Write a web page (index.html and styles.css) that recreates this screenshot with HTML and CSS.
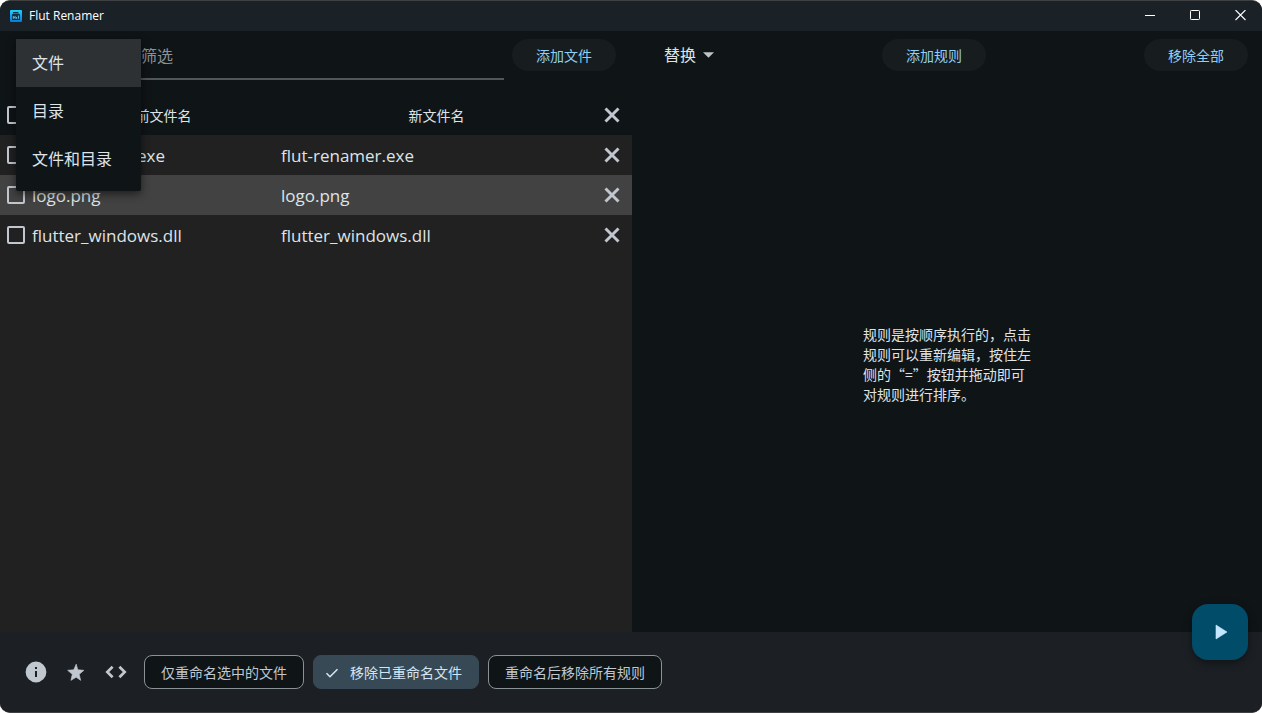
FILE: index.html
```html
<!DOCTYPE html>
<html lang="zh-CN">
<head>
<meta charset="utf-8">
<title>Flut Renamer</title>
<link rel="stylesheet" href="styles.css">
</head>
<body>
<svg class="defs" aria-hidden="true">
  <symbol id="close" viewBox="0 0 24 24"><path d="M5.5 5.500 18.500 18.500M18.500 5.500 5.500 18.500" fill="none" stroke="currentColor" stroke-width="2.900"/></symbol>
</svg>
<div class="window">
  <header class="titlebar">
    <svg class="app-icon" viewBox="0 0 12 12" aria-hidden="true">
      <defs><linearGradient id="logo" x1="0" y1="0" x2="0" y2="1"><stop offset="0" stop-color="#1fd0fb"/><stop offset="1" stop-color="#0878e0"/></linearGradient></defs>
      <rect width="12" height="12" rx="1" fill="url(#logo)"/>
      <path d="M3 2h5l1 1.4H3z" fill="#103246"/>
      <rect x="2" y="4" width="8" height="6" rx=".6" fill="#103246"/>
      <path d="M3.300 8.800V6.400l1.800 2V6M6.600 8.800V7M8.400 8.800V5.600" fill="none" stroke="#5cd2f5" stroke-width=".9"/>
    </svg>
    <span class="app-name">Flut Renamer</span>
    <div class="window-controls">
      <button aria-label="最小化"><svg viewBox="0 0 12 12"><path d="M1 5.500h10" stroke="currentColor"/></svg></button>
      <button aria-label="最大化"><svg viewBox="0 0 12 12"><rect x="1.500" y=".5" width="9" height="9" rx=".8" fill="none" stroke="currentColor"/></svg></button>
      <button aria-label="关闭"><svg viewBox="0 0 12 12"><path d="M1.500 0l10 10M11.500 0l-10 10" stroke="currentColor" stroke-width="1.100"/></svg></button>
    </div>
  </header>

  <main class="content">
    <section class="files">
      <div class="toolbar files-toolbar">
        <div class="type-picker">
          <div class="menu" role="listbox" aria-label="类型">
            <button class="menu-item selected" role="option" aria-selected="true">文件</button>
            <button class="menu-item" role="option">目录</button>
            <button class="menu-item" role="option">文件和目录</button>
          </div>
        </div>
        <input class="filter" type="text" placeholder="筛选" aria-label="筛选">
        <button class="pill">添加文件</button>
      </div>
      <table class="file-table">
        <colgroup><col class="col-check"><col class="col-current"><col><col class="col-remove"></colgroup>
        <thead>
          <tr>
            <th><input type="checkbox" aria-label="全选"></th>
            <th class="name">当前文件名</th>
            <th class="name">新文件名</th>
            <th><button class="remove" aria-label="移除全部文件"><svg><use href="#close"/></svg></button></th>
          </tr>
        </thead>
        <tbody>
          <tr>
            <td><input type="checkbox" aria-label="flut-renamer.exe"></td>
            <td class="name">flut-renamer.exe</td>
            <td class="name">flut-renamer.exe</td>
            <td><button class="remove" aria-label="移除"><svg><use href="#close"/></svg></button></td>
          </tr>
          <tr class="active">
            <td><input type="checkbox" aria-label="logo.png"></td>
            <td class="name">logo.png</td>
            <td class="name">logo.png</td>
            <td><button class="remove" aria-label="移除"><svg><use href="#close"/></svg></button></td>
          </tr>
          <tr>
            <td><input type="checkbox" aria-label="flutter_windows.dll"></td>
            <td class="name">flutter_windows.dll</td>
            <td class="name">flutter_windows.dll</td>
            <td><button class="remove" aria-label="移除"><svg><use href="#close"/></svg></button></td>
          </tr>
        </tbody>
      </table>
    </section>

    <section class="rules">
      <div class="toolbar rules-toolbar">
        <div class="rule-picker">
          <select aria-label="规则类型"><option>替换</option></select>
          <svg class="arrow" viewBox="0 0 10 5" aria-hidden="true"><path d="M0 0h10L5 5z" fill="currentColor"/></svg>
        </div>
        <button class="pill">添加规则</button>
        <button class="pill">移除全部</button>
      </div>
      <div class="empty">
        <p class="hint">规则是按顺序执行的，点击<br>规则可以重新编辑，按住左<br>侧的“=”按钮并拖动即可<br>对规则进行排序。</p>
      </div>
    </section>
  </main>

  <footer class="footer">
    <div class="links">
      <button aria-label="关于"><svg viewBox="0 0 24 24"><path fill="currentColor" d="M12 1.600a10.400 10.400 0 1 0 0 20.800 10.400 10.400 0 0 0 0-20.800zm1 15.400h-2v-6h2v6zm0-8h-2V7h2v2z"/></svg></button>
      <button aria-label="收藏"><svg viewBox="0 0 24 24"><path fill="currentColor" stroke="currentColor" stroke-width=".8" d="M12 17.270 17.180 21l-1.640-7.030L21 9.240l-7.190-.61L12 2 9.190 8.630 2 9.240l5.460 4.730L5.820 21z" transform="translate(2 2.500) scale(.85)"/></svg></button>
      <button aria-label="源代码"><svg viewBox="0 0 24 24"><path fill="none" stroke="currentColor" stroke-width="2.700" d="M8.600 6.700 3.300 12l5.300 5.300M15.400 6.700l5.300 5.300-5.300 5.300"/></svg></button>
    </div>
    <div class="chips">
      <button class="chip" aria-pressed="false">仅重命名选中的文件</button>
      <button class="chip on" aria-pressed="true"><svg viewBox="0 0 14 14" aria-hidden="true"><path d="M1.500 7.200 5 10.700 12.500 3.200" fill="none" stroke="currentColor" stroke-width="1.600"/></svg>移除已重命名文件</button>
      <button class="chip" aria-pressed="false">重命名后移除所有规则</button>
    </div>
  </footer>
  <button class="run" aria-label="运行"><svg viewBox="0 0 24 24"><path fill="currentColor" stroke="currentColor" stroke-width=".6" stroke-linejoin="round" d="M8 5v14l11-7z"/></svg></button>
</div>
</body>
</html>
```
FILE: styles.css
```css
* {
  box-sizing: border-box;
}

body {
  margin: 0;
  background: #fff;
  color: #dfe3e7;
  font: 14px/20px "Open Sans", "Noto Sans CJK SC", sans-serif;
}

button,
input,
select {
  margin: 0;
  padding: 0;
  border: 0;
  background: none;
  color: inherit;
  font: inherit;
}

svg {
  display: block;
}

.defs {
  position: absolute;
  width: 0;
  height: 0;
}

.window {
  position: relative;
  display: flex;
  flex-direction: column;
  min-height: 100vh;
  overflow: hidden;
  border-top: 1px solid #3f4042;
  border-bottom: 1px solid #3f4042;
  border-radius: 10px;
  background: #0f1417;
}

.titlebar {
  display: flex;
  align-items: center;
  height: 30px;
  padding-left: 10px;
  background: #1a2127;
  color: #fff;
  font-size: 12px;
}

.app-icon {
  width: 12px;
  height: 12px;
  margin-right: 7px;
}

.window-controls {
  display: flex;
  margin-left: auto;
}

.window-controls button {
  display: grid;
  place-items: center;
  width: 45px;
  height: 30px;
}

.window-controls svg {
  width: 12px;
  height: 12px;
}

.content {
  display: flex;
  flex: 1;
}

.files {
  flex: none;
  width: calc(50% + 1px);
  background: #212121;
}

.rules {
  display: flex;
  flex: 1;
  flex-direction: column;
}

.toolbar {
  display: flex;
  align-items: flex-start;
  height: 64px;
  padding-top: 8px;
  background: #0f1417;
}

.files-toolbar {
  padding-right: 16px;
  padding-left: 16px;
}

.type-picker {
  position: relative;
  flex: none;
  width: 125px;
}

.menu {
  position: absolute;
  z-index: 2;
  top: 0;
  left: 0;
  width: 100%;
  padding-bottom: 8px;
  border-radius: 2px;
  background: #0f1417;
  box-shadow: 0 3px 8px rgba(0, 0, 0, .55);
}

.menu-item {
  display: block;
  width: 100%;
  height: 48px;
  padding-left: 16px;
  font-size: 16px;
  text-align: left;
}

.menu-item.selected {
  background: #2d3134;
}

.filter {
  flex: 1;
  min-width: 0;
  height: 41px;
  margin-right: 8px;
  padding-bottom: 6px;
  border-bottom: 2px solid #50565a;
  font-size: 16px;
}

.filter::placeholder {
  color: #8d9194;
  opacity: 1;
}

.pill {
  width: 104px;
  height: 32px;
  padding-top: 2px;
  border-radius: 16px;
  background: #171c1f;
  color: #8fcff3;
}

.file-table {
  width: 100%;
  table-layout: fixed;
  border-collapse: collapse;
}

.col-check {
  width: 32px;
}

.col-current {
  width: 39.4%;
}

.col-remove {
  width: 40px;
}

.file-table tr {
  height: 40px;
}

.file-table thead {
  background: #0f1417;
}

.file-table th {
  padding: 0;
  font-weight: 400;
}

.file-table td {
  padding: 0;
  font-size: 17px;
}

.file-table .name {
  padding-top: 2px;
}

.file-table .active {
  background: #424242;
}

.file-table input {
  display: block;
  width: 18px;
  height: 18px;
  margin: 0 auto;
  border: 2px solid #c0c7cf;
  border-radius: 2px;
  appearance: none;
}

.remove {
  display: grid;
  place-items: center;
  width: 40px;
  height: 40px;
  color: #c0c7cf;
}

.remove svg {
  width: 24px;
  height: 24px;
}

.rules-toolbar {
  justify-content: space-between;
  padding-right: 14px;
  padding-left: 32px;
}

.rule-picker {
  display: flex;
  align-items: center;
  width: 60px;
  height: 32px;
  gap: 6px;
}

.rule-picker select {
  font-size: 16px;
  line-height: 24px;
  appearance: none;
}

.arrow {
  width: 11px;
  height: 6px;
  color: #c0c3c5;
}

.empty {
  display: grid;
  flex: 1;
  place-items: center;
}

.hint {
  margin: 0;
  font-family: "Noto Sans CJK SC", sans-serif;
}

.footer {
  display: flex;
  align-items: center;
  height: 80px;
  padding: 0 16px;
  gap: 8px;
  background: #1c2024;
  color: #c0c7cf;
}

.links {
  display: flex;
}

.links button {
  display: grid;
  place-items: center;
  width: 40px;
  height: 40px;
}

.links svg {
  width: 24px;
  height: 24px;
}

.chips {
  display: flex;
  gap: 9px;
}

.chip {
  display: flex;
  align-items: center;
  height: 34px;
  padding: 1px 16px 0;
  border: 1px solid #8a9297;
  border-radius: 8px;
  background: #0f1417;
}

.chip.on {
  padding-left: 11px;
  gap: 11px;
  border-color: #374955;
  background: #374955;
  color: #d2e5f5;
}

.chip svg {
  width: 14px;
  height: 14px;
}

.run {
  position: absolute;
  right: 14px;
  bottom: 52px;
  display: grid;
  place-items: center;
  width: 56px;
  height: 56px;
  border-radius: 16px;
  background: #004c69;
  box-shadow: 0 3px 8px rgba(0, 0, 0, .4);
  color: #c4e7ff;
}

.run svg {
  width: 24px;
  height: 24px;
}
```
